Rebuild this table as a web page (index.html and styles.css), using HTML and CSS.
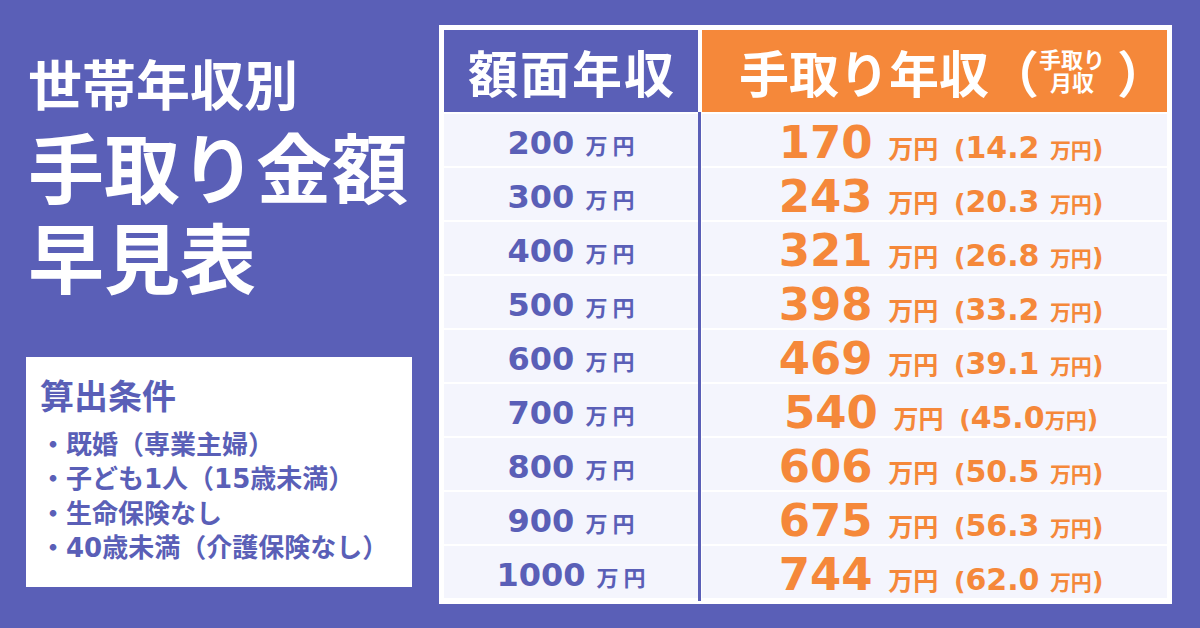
FILE: index.html
```html
<!DOCTYPE html>
<html lang="ja">

<head>
    <meta charset="utf-8">
    <title>世帯年収別 手取り金額早見表</title>
    <link rel="stylesheet" href="styles.css">
</head>

<body>
    <div class="side">
        <h1 class="title">
            <span class="title_small">世帯年収別</span>
            <span class="title_big">手取り金額</span>
            <span class="title_big">早見表</span>
        </h1>
        <div class="cond">
            <h2 class="cond_h">算出条件</h2>
            <ul class="cond_list">
                <li>・既婚（専業主婦）</li>
                <li>・子ども1人（15歳未満）</li>
                <li>・生命保険なし</li>
                <li>・40歳未満（介護保険なし）</li>
            </ul>
        </div>
    </div>

    <div class="board">
        <div class="board_head">
            <div class="head_gross">額面年収</div>
            <div class="head_net">手取り年収（<span class="head_sub"><span>手取り</span><span>月収</span></span>）</div>
        </div>
        <div class="board_body">
            <div class="divider"></div>

            <div class="cell_gross"><span class="g_num">200</span> <span class="g_unit">万円</span></div>
            <div class="cell_net"><span class="n_num">170</span> <span class="n_unit">万円</span> <span class="n_month"><span class="paren">(</span>14.2 <span class="m_unit">万円</span><span class="paren">)</span></span></div>

            <div class="cell_gross"><span class="g_num">300</span> <span class="g_unit">万円</span></div>
            <div class="cell_net"><span class="n_num">243</span> <span class="n_unit">万円</span> <span class="n_month"><span class="paren">(</span>20.3 <span class="m_unit">万円</span><span class="paren">)</span></span></div>

            <div class="cell_gross"><span class="g_num">400</span> <span class="g_unit">万円</span></div>
            <div class="cell_net"><span class="n_num">321</span> <span class="n_unit">万円</span> <span class="n_month"><span class="paren">(</span>26.8 <span class="m_unit">万円</span><span class="paren">)</span></span></div>

            <div class="cell_gross"><span class="g_num">500</span> <span class="g_unit">万円</span></div>
            <div class="cell_net"><span class="n_num">398</span> <span class="n_unit">万円</span> <span class="n_month"><span class="paren">(</span>33.2 <span class="m_unit">万円</span><span class="paren">)</span></span></div>

            <div class="cell_gross"><span class="g_num">600</span> <span class="g_unit">万円</span></div>
            <div class="cell_net"><span class="n_num">469</span> <span class="n_unit">万円</span> <span class="n_month"><span class="paren">(</span>39.1 <span class="m_unit">万円</span><span class="paren">)</span></span></div>

            <div class="cell_gross"><span class="g_num">700</span> <span class="g_unit">万円</span></div>
            <div class="cell_net"><span class="n_num">540</span> <span class="n_unit">万円</span> <span class="n_month"><span class="paren">(</span>45.0<span class="m_unit">万円</span><span class="paren">)</span></span></div>

            <div class="cell_gross"><span class="g_num">800</span> <span class="g_unit">万円</span></div>
            <div class="cell_net"><span class="n_num">606</span> <span class="n_unit">万円</span> <span class="n_month"><span class="paren">(</span>50.5 <span class="m_unit">万円</span><span class="paren">)</span></span></div>

            <div class="cell_gross"><span class="g_num">900</span> <span class="g_unit">万円</span></div>
            <div class="cell_net"><span class="n_num">675</span> <span class="n_unit">万円</span> <span class="n_month"><span class="paren">(</span>56.3 <span class="m_unit">万円</span><span class="paren">)</span></span></div>

            <div class="cell_gross"><span class="g_num">1000</span> <span class="g_unit">万円</span></div>
            <div class="cell_net"><span class="n_num">744</span> <span class="n_unit">万円</span> <span class="n_month"><span class="paren">(</span>62.0 <span class="m_unit">万円</span><span class="paren">)</span></span></div>
        </div>
    </div>
</body>

</html>
```

FILE: styles.css
```css
* {
    margin: 0;
    padding: 0;
    box-sizing: border-box;
}

body {
    width: 1200px;
    height: 628px;
    background-color: #5a5fb7;
    display: flex;
    font-family: "DejaVu Sans", "Noto Sans CJK JP", sans-serif;
    font-weight: bold;
    overflow: hidden;
}

.side {
    width: 439px;
    padding: 58px 0 0 26px;
    display: flex;
    flex-direction: column;
}

.title {
    color: white;
    margin-left: 2px;
    font-weight: bold;
}

.title_small {
    display: block;
    font-size: 54px;
    line-height: 60px;
    margin-bottom: 9px;
}

.title_big {
    display: block;
    font-size: 76px;
    line-height: 90px;
}

.cond {
    width: 386px;
    height: 230px;
    margin-top: 50px;
    padding: 20px 0 0 14px;
    background-color: white;
    color: #5a5fb7;
}

.cond_h {
    font-size: 34px;
    line-height: 40px;
}

.cond_list {
    list-style: none;
    margin-top: 11px;
    font-size: 26px;
    line-height: 34.3px;
}

.board {
    width: 733px;
    height: 579px;
    margin-top: 25px;
    padding: 5px 5px 6px;
    background-color: white;
}

.board_head {
    display: grid;
    grid-template-columns: 254px 1fr;
    column-gap: 4px;
    height: 82px;
    color: white;
}

.head_gross {
    background-color: #5a5fb7;
    display: flex;
    justify-content: center;
    align-items: center;
    font-size: 50px;
    letter-spacing: 2px;
    padding-left: 2px;
}

.head_net {
    background-color: #f5883a;
    display: flex;
    align-items: center;
    font-size: 50px;
    padding-left: 37px;
}

.head_sub {
    display: flex;
    flex-direction: column;
    align-items: center;
    font-size: 22px;
    line-height: 23px;
    margin-right: 12px;
    padding-top: 2px;
}

.board_body {
    display: grid;
    grid-template-columns: 254px 4px 1fr;
    grid-auto-rows: 52px;
    row-gap: 2px;
    margin-top: 2px;
}

.divider {
    grid-column: 2;
    grid-row: 1 / span 9;
    width: 3px;
    margin: -2px 0 -3px;
    background-color: #5a5fb7;
}

.cell_gross,
.cell_net {
    background-color: #f4f5fd;
    text-align: center;
    line-height: 52px;
    white-space: nowrap;
}

.cell_gross span,
.cell_net span {
    line-height: 1;
}

.cell_gross {
    grid-column: 1;
    color: #5a5fb7;
    font-size: 32px;
    padding-top: 3px;
}

.g_unit {
    font-size: 22px;
    letter-spacing: 5px;
    margin-right: -5px;
}

.cell_net {
    grid-column: 3;
    color: #f5883a;
    font-size: 45px;
    padding: 3px 0 0 13px;
}

.n_unit {
    font-size: 25px;
}

.n_month {
    font-size: 30px;
}

.m_unit {
    font-size: 21px;
}

.paren {
    font-size: 25px;
}
```
